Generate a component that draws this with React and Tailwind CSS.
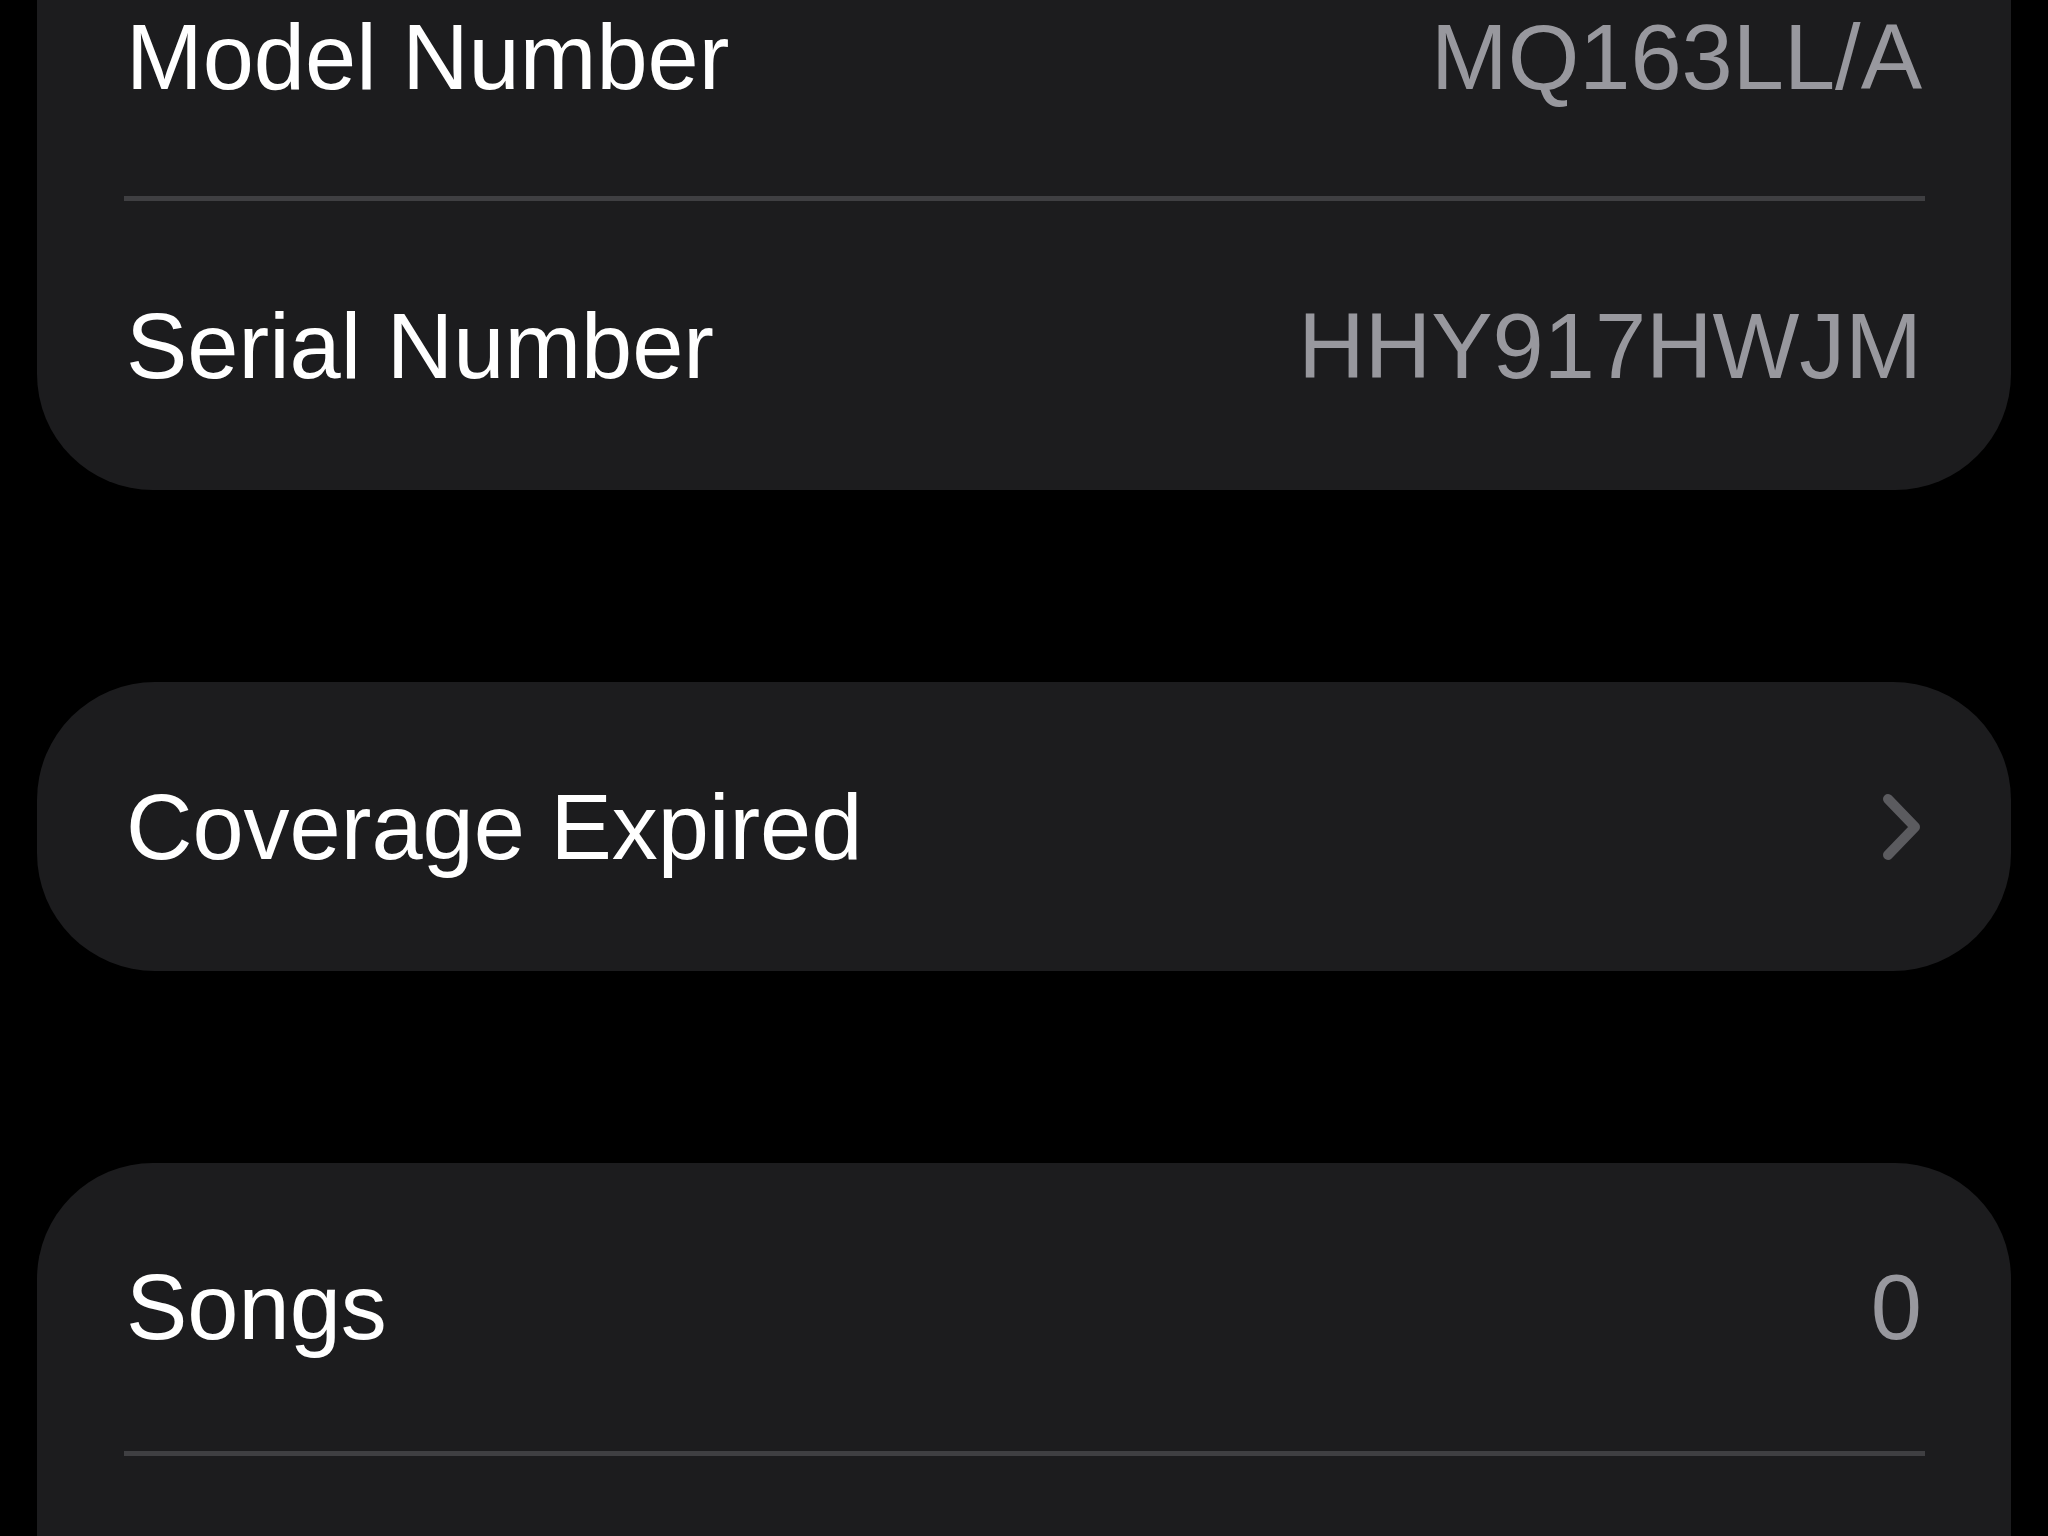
import React from 'react';

const font = { fontFamily: '"Liberation Sans", Arial, sans-serif' };

function Chevron() {
  return (
    <svg width="40" height="68" viewBox="0 0 40 68" fill="none" className="shrink-0">
      <path d="M6 6 L33 34 L6 62" stroke="#5b5b5f" strokeWidth="10" strokeLinecap="round" strokeLinejoin="round" />
    </svg>
  );
}

function Row({ label, value, chevron, className = 'h-[289px]' }) {
  return (
    <div className={`flex items-center justify-between pl-[89px] pr-[89px] ${className}`}>
      <span className="text-[92px] leading-none text-white whitespace-nowrap">{label}</span>
      {value !== undefined && (
        <span className="text-[92px] leading-none text-[#98989e] whitespace-nowrap">{value}</span>
      )}
      {chevron && <Chevron />}
    </div>
  );
}

function Divider() {
  return <div className="h-[5px] ml-[87px] mr-[86px] bg-[#3f3f42]" />;
}

export default function App() {
  return (
    <div className="h-[1536px] w-full overflow-hidden bg-black" style={font}>
      <div className="flex flex-col gap-[192px] px-[37px]">
        {/* About: model / serial */}
        <div className="-mt-[83px] rounded-b-[116px] bg-[#1c1c1e]">
          <Row label="Model Number" value="MQ163LL/A" className="h-[279px]" />
          <Divider />
          <Row label="Serial Number" value="HHY917HWJM" />
        </div>

        {/* Coverage */}
        <div className="rounded-[118px] bg-[#1c1c1e]">
          <Row label="Coverage Expired" chevron />
        </div>

        {/* Media counts, continues below the fold */}
        <div className="rounded-t-[116px] bg-[#1c1c1e]">
          <Row label="Songs" value="0" className="h-[288px]" />
          <Divider />
          <div className="h-[289px]" />
        </div>
      </div>
    </div>
  );
}
